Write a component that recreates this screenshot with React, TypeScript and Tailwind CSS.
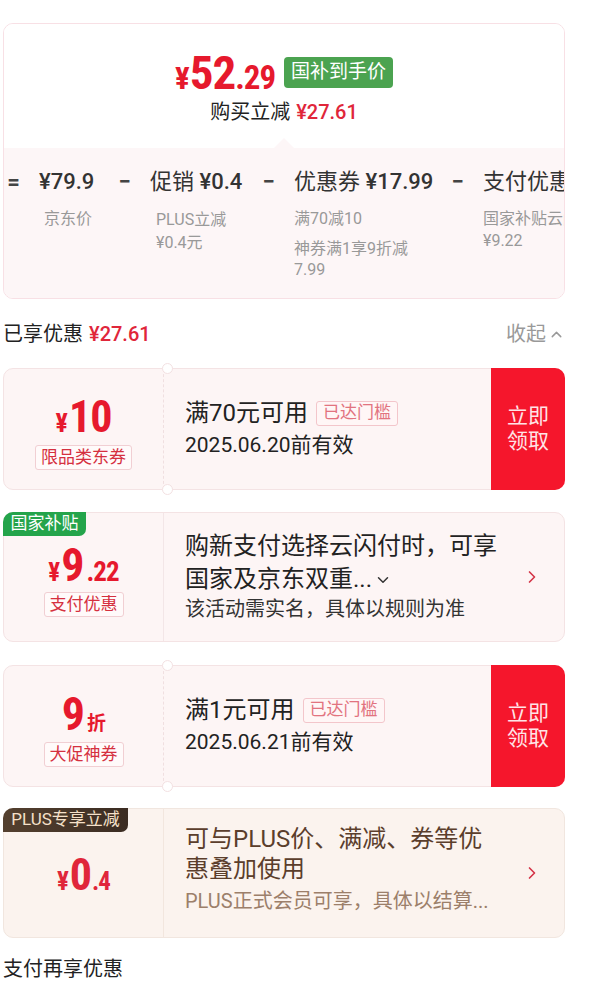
import { ChevronDown, ChevronRight, ChevronUp } from "lucide-react";

const NARROW =
  "font-['Roboto_Condensed','Liberation_Sans_Narrow','DejaVu_Sans_Condensed','Roboto',sans-serif] [font-stretch:condensed] tracking-[-1px]";

function Notches() {
  return (
    <>
      <span className="absolute left-[158px] top-[-6px] h-[11px] w-[11px] rounded-full border border-[#f3e1e2] bg-white" />
      <span className="absolute bottom-[-6px] left-[158px] h-[11px] w-[11px] rounded-full border border-[#f3e1e2] bg-white" />
    </>
  );
}

function GrabButton() {
  return (
    <div className="flex w-[74px] shrink-0 flex-col items-center justify-center bg-[#f5162c] text-[21px] leading-[25px] text-[#ffe4e7]">
      <span>立即</span>
      <span>领取</span>
    </div>
  );
}

function RedLabel({ text }: { text: string }) {
  return (
    <span className="flex h-[25px] items-center rounded-[3px] border border-[#f1cfd3] bg-[#fffafa] px-[5px] text-[17px] text-[#d5303f]">
      {text}
    </span>
  );
}

function ReachedTag() {
  return (
    <span className="ml-[8px] flex h-[25px] items-center rounded-[3px] border border-[#f3c6cb] bg-[#fff6f6] px-[6px] text-[17px] text-[#e2737f]">
      已达门槛
    </span>
  );
}

export default function App() {
  return (
    <div className="min-h-[988px] w-[594px] bg-white pl-[3px] pr-[29px] pt-[23px] font-['Roboto','Noto_Sans_CJK_SC',sans-serif] text-[#222]">
      {/* price breakdown card */}
      <div className="overflow-hidden rounded-[10px] border border-[#f8e0e5]">
        <div className="relative flex h-[124px] flex-col items-center bg-white pt-[32px]">
          <div className="flex h-[32px] items-center gap-[9px]">
            <div className={`flex items-baseline font-bold text-[#e6192d] ${NARROW}`}>
              <span className="text-[31px] leading-none">¥</span>
              <span className="ml-[1px] text-[47px] leading-none">52</span>
              <span className="text-[33px] leading-none">.29</span>
            </div>
            <span className="flex h-[31px] items-center rounded-[4px] bg-[#4ba350] px-[7px] text-[19px] text-white">
              国补到手价
            </span>
          </div>
          <div className="mt-[12px] flex h-[24px] items-center gap-[6px] text-[20px]">
            <span className="text-[#222]">购买立减</span>
            <span className="font-medium text-[#e0263a]">¥27.61</span>
          </div>
          <span className="absolute bottom-0 left-1/2 h-0 w-0 -translate-x-1/2 border-x-[10px] border-b-[10px] border-x-transparent border-b-[#fdf6f7]" />
        </div>

        <div className="h-[150px] bg-[#fdf6f7]">
          <div className="flex gap-[19px] whitespace-nowrap pl-[3px] pt-[20px] text-[#333]">
            <span className="w-[13px] shrink-0 text-center text-[22px] font-bold leading-[28px] text-[#444]">=</span>
            <div className="flex w-[60px] shrink-0 flex-col">
              <span className="text-[22px] font-medium leading-[28px]">¥79.9</span>
              <span className="mt-[12px] pl-[5px] text-[16px] leading-[22px] text-[#999]">京东价</span>
            </div>
            <span className="w-[13px] shrink-0 text-center text-[22px] font-bold leading-[28px] text-[#444]">−</span>
            <div className="flex w-[93px] shrink-0 flex-col">
              <span className="text-[22px] leading-[28px]">
                促销 <span className="font-medium">¥0.4</span>
              </span>
              <span className="mt-[12px] pl-[6px] text-[16px] leading-[23px] text-[#999]">PLUS立减</span>
              <span className="pl-[6px] text-[16px] leading-[23px] text-[#999]">¥0.4元</span>
            </div>
            <span className="w-[13px] shrink-0 text-center text-[22px] font-bold leading-[28px] text-[#444]">−</span>
            <div className="flex w-[138px] shrink-0 flex-col">
              <span className="text-[22px] leading-[28px]">
                优惠券 <span className="font-medium">¥17.99</span>
              </span>
              <span className="mt-[12px] text-[16px] leading-[22px] text-[#999]">满70减10</span>
              <span className="mt-[8px] whitespace-normal text-[16px] leading-[21px] text-[#999]">神券满1享9折减 7.99</span>
            </div>
            <span className="w-[13px] shrink-0 text-center text-[22px] font-bold leading-[28px] text-[#444]">−</span>
            <div className="flex w-[130px] shrink-0 flex-col">
              <span className="text-[22px] leading-[28px]">支付优惠</span>
              <span className="mt-[12px] text-[16px] leading-[22px] text-[#999]">国家补贴云闪付</span>
              <span className="text-[16px] leading-[22px] text-[#999]">¥9.22</span>
            </div>
          </div>
        </div>
      </div>

      {/* enjoyed discount */}
      <div className="mt-[21px] flex h-[28px] items-center justify-between text-[20px]">
        <div className="flex items-center gap-[6px]">
          <span>已享优惠</span>
          <span className="font-medium text-[#e0263a]">¥27.61</span>
        </div>
        <div className="flex items-center gap-[2px] text-[#999]">
          <span>收起</span>
          <ChevronUp size={17} strokeWidth={2} />
        </div>
      </div>

      {/* coupon: 限品类东券 */}
      <div className="relative mt-[20px] flex h-[122px] rounded-[10px] border border-[#f4e3e4] bg-[#fdf5f5]">
        <div className="flex w-[159px] shrink-0 flex-col items-center pt-[28px]">
          <div className={`flex h-[40px] items-baseline font-bold text-[#e6192d] ${NARROW}`}>
            <span className="text-[26px] leading-[40px]">¥</span>
            <span className="ml-[2px] text-[44px] leading-[40px]">10</span>
          </div>
          <div className="mt-[8px]">
            <RedLabel text="限品类东券" />
          </div>
        </div>
        <div className="w-0 border-l border-dashed border-[#f0dfe0]" />
        <div className="flex flex-1 flex-col pl-[21px] pt-[30px]">
          <div className="flex h-[28px] items-center">
            <span className="text-[24px] leading-[28px]">满70元可用</span>
            <ReachedTag />
          </div>
          <span className="mt-[5px] text-[21px] leading-[26px]">2025.06.20前有效</span>
        </div>
        <div className="-my-px -mr-px flex overflow-hidden rounded-r-[10px]">
          <GrabButton />
        </div>
        <Notches />
      </div>

      {/* coupon: 国家补贴 */}
      <div className="relative mt-[22px] flex h-[130px] rounded-[10px] border border-[#f4e3e4] bg-[#fdf5f5]">
        <span className="absolute -left-px -top-px flex h-[24px] w-[83px] items-center justify-center rounded-br-[7px] rounded-tl-[10px] bg-[#24a44b] text-[17px] text-white">
          国家补贴
        </span>
        <div className="flex w-[159px] shrink-0 flex-col items-center pt-[32px]">
          <div className={`flex h-[40px] items-baseline font-bold text-[#e6192d] ${NARROW}`}>
            <span className="text-[25px] leading-[40px]">¥</span>
            <span className="ml-[2px] text-[46px] leading-[40px]">9</span>
            <span className="ml-[3px] text-[27px] leading-[40px]">.22</span>
          </div>
          <div className="mt-[7px]">
            <RedLabel text="支付优惠" />
          </div>
        </div>
        <div className="w-0 border-l border-[#f3e6e7]" />
        <div className="flex flex-1 items-center pl-[21px] pr-[22px]">
          <div className="flex flex-1 flex-col pb-[2px]">
            <span className="text-[24px] leading-[33px]">购新支付选择云闪付时，可享</span>
            <span className="flex items-center text-[24px] leading-[33px]">
              国家及京东双重...
              <ChevronDown size={18} strokeWidth={2} className="ml-[2px] text-[#333]" />
            </span>
            <span className="text-[20px] leading-[26px] text-[#333]">该活动需实名，具体以规则为准</span>
          </div>
          <ChevronRight size={20} strokeWidth={2} className="text-[#d43447]" />
        </div>
      </div>

      {/* coupon: 大促神券 */}
      <div className="relative mt-[23px] flex h-[122px] rounded-[10px] border border-[#f4e3e4] bg-[#fdf5f5]">
        <div className="flex w-[159px] shrink-0 flex-col items-center pt-[28px]">
          <div className={`flex h-[40px] items-baseline font-bold text-[#e6192d] ${NARROW}`}>
            <span className="text-[46px] leading-[40px]">9</span>
            <span className="ml-[3px] font-['Noto_Sans_CJK_SC',sans-serif] text-[19px] leading-[40px]">折</span>
          </div>
          <div className="mt-[8px]">
            <RedLabel text="大促神券" />
          </div>
        </div>
        <div className="w-0 border-l border-dashed border-[#f0dfe0]" />
        <div className="flex flex-1 flex-col pl-[21px] pt-[30px]">
          <div className="flex h-[28px] items-center">
            <span className="text-[24px] leading-[28px]">满1元可用</span>
            <ReachedTag />
          </div>
          <span className="mt-[5px] text-[21px] leading-[26px]">2025.06.21前有效</span>
        </div>
        <div className="-my-px -mr-px flex overflow-hidden rounded-r-[10px]">
          <GrabButton />
        </div>
        <Notches />
      </div>

      {/* coupon: PLUS */}
      <div className="relative mt-[21px] flex h-[130px] rounded-[10px] border border-[#f1e6df] bg-[#fbf3ee]">
        <span className="absolute -left-px -top-px flex h-[24px] w-[125px] items-center justify-center rounded-br-[7px] rounded-tl-[10px] bg-gradient-to-r from-[#54402f] to-[#3b2c22] text-[17px] text-[#f5e0c9]">
          PLUS专享立减
        </span>
        <div className="flex w-[159px] shrink-0 flex-col items-center pt-[46px]">
          <div className={`flex h-[40px] items-baseline font-bold text-[#e0263a] ${NARROW}`}>
            <span className="text-[25px] leading-[40px]">¥</span>
            <span className="ml-[2px] text-[44px] leading-[40px]">0</span>
            <span className="ml-[1px] text-[25px] leading-[40px]">.4</span>
          </div>
        </div>
        <div className="w-0 border-l border-[#f2e6de]" />
        <div className="flex flex-1 items-center pl-[21px] pr-[22px]">
          <div className="flex flex-1 flex-col pb-[4px] text-[#5b3e2c]">
            <span className="text-[24px] leading-[30px]">可与PLUS价、满减、券等优</span>
            <span className="text-[24px] leading-[30px]">惠叠加使用</span>
            <span className="text-[20px] leading-[34px] text-[#9c7f6a]">PLUS正式会员可享，具体以结算...</span>
          </div>
          <ChevronRight size={20} strokeWidth={2} className="text-[#d43447]" />
        </div>
      </div>

      <div className="mt-[17px] flex h-[28px] items-center text-[20px]">支付再享优惠</div>
    </div>
  );
}
